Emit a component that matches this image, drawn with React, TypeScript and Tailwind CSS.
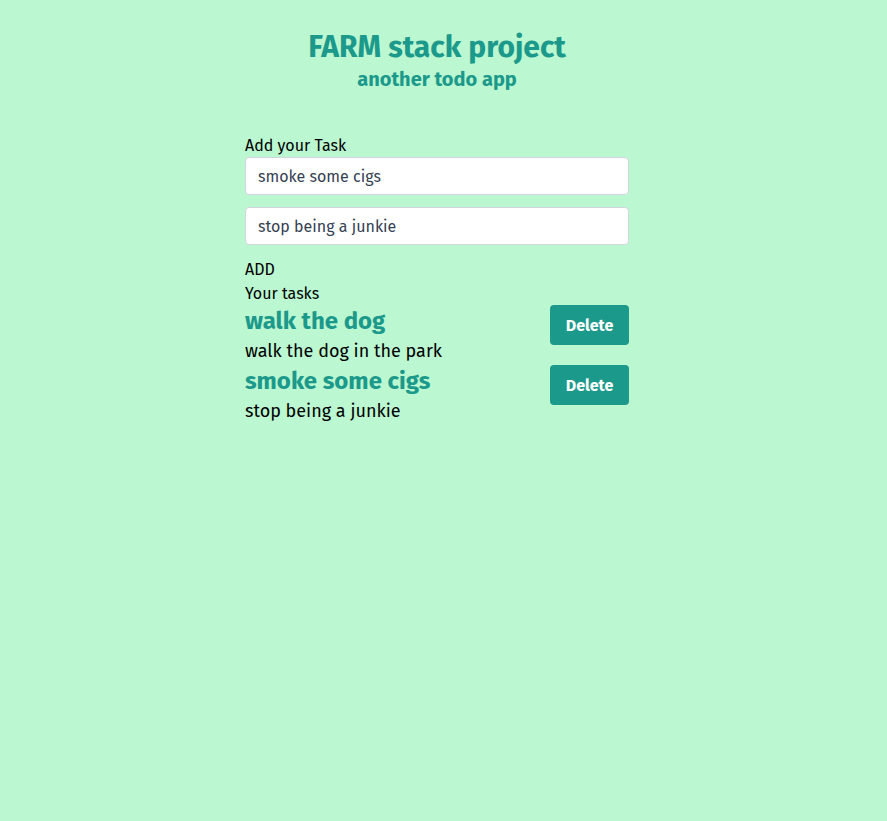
import React, { useState } from 'react';

type Todo = { title: string; description: string };

const initialTodos: Todo[] = [
  { title: 'walk the dog', description: 'walk the dog in the park' },
  { title: 'smoke some cigs', description: 'stop being a junkie' },
];

export default function App() {
  const [title, setTitle] = useState('smoke some cigs');
  const [description, setDescription] = useState('stop being a junkie');
  const [todos, setTodos] = useState<Todo[]>(initialTodos);

  const font = { fontFamily: '"Fira Sans", Roboto, "Noto Sans", sans-serif' };

  const handleAdd = () => {
    setTodos([...todos, { title, description }]);
  };

  const handleDelete = (t: string) => {
    setTodos(todos.filter((todo) => todo.title !== t));
  };

  return (
    <div className="min-h-screen bg-[#bbf7d0] pr-[13px] pt-[29px]" style={font}>
      <div className="mx-auto w-96">
        <h1 className="text-center text-[30px] font-bold leading-[36px] text-[#1b998b]">
          FARM stack project
        </h1>
        <h2 className="text-center text-[20px] font-bold leading-[28px] text-[#1b998b]">
          another todo app
        </h2>

        <div className="mt-10">
          <p className="pt-px text-base leading-[23px] text-black">Add your Task</p>
          <input
            className="block h-[38px] w-full rounded border border-gray-300 bg-white px-3 text-base text-gray-700 outline-none"
            value={title}
            onChange={(e) => setTitle(e.target.value)}
          />
          <input
            className="mt-3 block h-[38px] w-full rounded border border-gray-300 bg-white px-3 text-base text-gray-700 outline-none"
            value={description}
            onChange={(e) => setDescription(e.target.value)}
          />
          <button className="mt-3 block pt-px text-base leading-[23px] text-black" onClick={handleAdd}>
            ADD
          </button>
        </div>

        <p className="pt-px text-base leading-[23px] text-black">Your tasks</p>
        <div>
          {todos.map((todo) => (
            <div key={todo.title} className="flex items-start justify-between">
              <div>
                <h3 className="text-2xl font-bold leading-8 text-[#1b998b]">{todo.title}</h3>
                <p className="text-lg leading-[28px] text-black">{todo.description}</p>
              </div>
              <button
                className="h-10 w-[79px] rounded bg-[#1b998b] pt-px text-base font-bold text-white"
                onClick={() => handleDelete(todo.title)}
              >
                Delete
              </button>
            </div>
          ))}
        </div>
      </div>
    </div>
  );
}
